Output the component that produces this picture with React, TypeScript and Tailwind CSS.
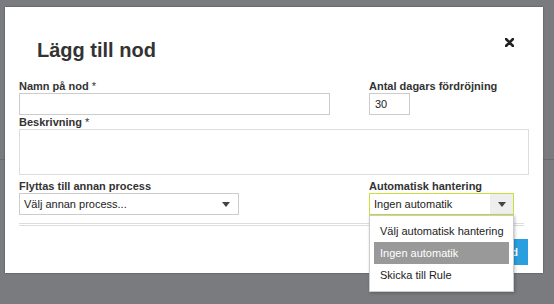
const font = { fontFamily: '"Liberation Sans", Arial, sans-serif' };

const Caret = () => (
  <svg width="8" height="5" viewBox="0 0 8 5" className="block">
    <path d="M0 0h8L4 5z" fill="#444" />
  </svg>
);

const Label = ({ children }: { children: React.ReactNode }) => (
  <div className="text-[11px] leading-[13px] font-bold text-[#333]">{children}</div>
);

const App = () => {
  const options = ["Välj automatisk hantering", "Ingen automatik", "Skicka till Rule"];

  return (
    <div
      className="relative w-[554px] h-[304px] overflow-hidden bg-[#7a7b7f]"
      style={font}
    >
      {/* page behind the overlay */}
      <div className="h-[160px] border-b border-[#6b6c70]" />

      {/* modal */}
      <div className="absolute left-[5px] top-[7px] w-[538px] h-[266px] bg-white shadow-[0_0_2px_rgba(0,0,0,0.35)]">
        <div className="flex items-start justify-between pt-[32px] pl-[32px] pr-[29px]">
          <h3 className="text-[20px] leading-[23px] font-bold text-[#333]">Lägg till nod</h3>
          <svg width="9" height="9" viewBox="0 0 9 9" className="mt-[-1px]">
            <path d="M1 1l7 7M8 1l-7 7" stroke="#222" strokeWidth="2.6" strokeLinecap="round" />
          </svg>
        </div>

        <div className="px-[14px] mt-[18px]">
          {/* name + delay */}
          <div className="flex">
            <div className="w-[350px]">
              <Label>
                Namn på nod <span className="font-normal">*</span>
              </Label>
              <div className="w-[311px] h-[22px] border border-[#ccc]" />
            </div>
            <div>
              <Label>Antal dagars fördröjning</Label>
              <div className="w-[41px] h-[22px] border border-[#ccc] pl-[5px] text-[11px] leading-[20px] text-[#222]">
                30
              </div>
            </div>
          </div>

          {/* description */}
          <div className="mt-[1px]">
            <Label>
              Beskrivning <span className="font-normal">*</span>
            </Label>
            <div className="w-full h-[46px] border border-[#ddd]" />
          </div>

          {/* process + automation */}
          <div className="flex mt-[5px]">
            <div className="w-[350px]">
              <Label>Flyttas till annan process</Label>
              <div className="w-[220px] h-[22px] border border-[#ccc] flex items-center justify-between pl-[4px] pr-[8px] text-[11px] text-[#222]">
                <span>Välj annan process...</span>
                <Caret />
              </div>
            </div>
            <div className="relative">
              <Label>Automatisk hantering</Label>
              <div className="w-[145px] h-[22px] border border-[#c9df3c] flex items-center text-[11px] text-[#222]">
                <span className="flex-1 pl-[4px]">Ingen automatik</span>
                <div className="w-[23px] h-full bg-[#eee] flex items-center justify-center">
                  <Caret />
                </div>
              </div>

              {/* open dropdown */}
              <div className="absolute z-10 left-0 top-full w-[145px] h-[77px] bg-white border border-[#ccc] shadow-[1px_1px_3px_rgba(0,0,0,0.25)] px-[4px] pt-[4px]">
                {options.map((o, i) => (
                  <div
                    key={o}
                    className={`h-[22px] pl-[6px] flex items-center text-[11px] ${
                      i === 1 ? "bg-[#999] text-white" : "text-[#222]"
                    }`}
                  >
                    {o}
                  </div>
                ))}
              </div>
            </div>
          </div>

          <div className="mt-[8px] mr-[5px] h-[3px] border-y border-[#ddd]" />

          <div className="flex justify-end mt-[13px] mr-[1px]">
            <button className="h-[26px] px-[10px] bg-[#2a9fe0] text-white text-[11px] font-bold">
              Lägg till nod
            </button>
          </div>
        </div>
      </div>
    </div>
  );
};

export default App;
